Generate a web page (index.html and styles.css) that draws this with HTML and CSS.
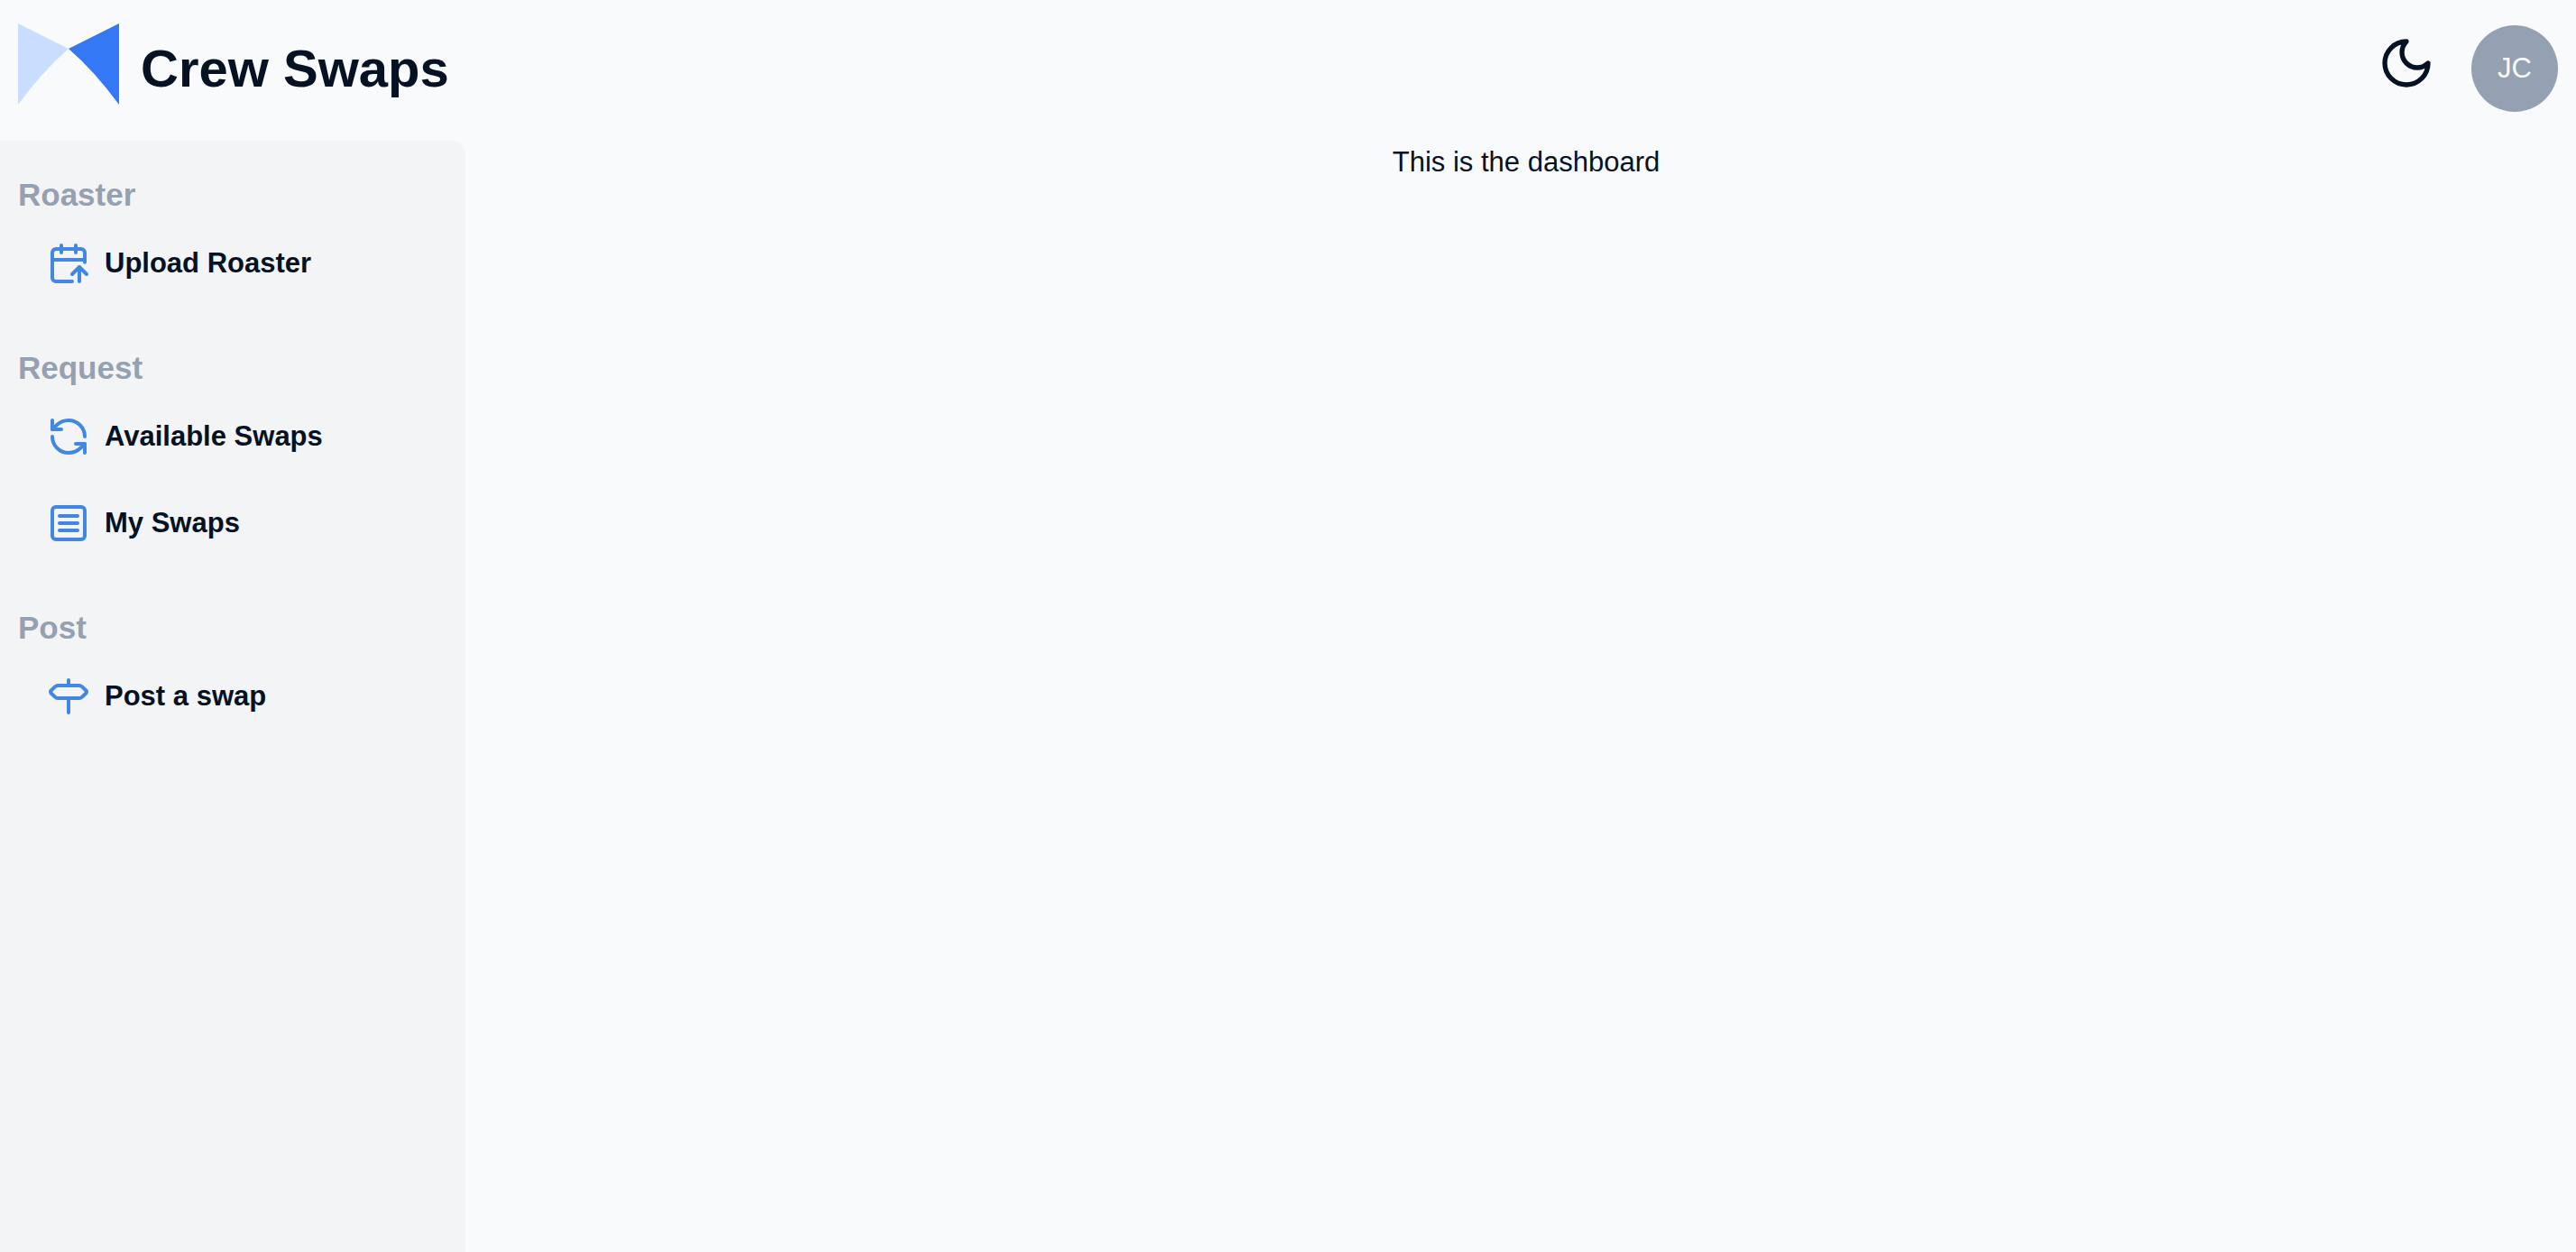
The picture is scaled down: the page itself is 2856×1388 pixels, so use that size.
FILE: index.html
```html
<!DOCTYPE html>
<html lang="en">
<head>
<meta charset="utf-8">
<meta name="viewport" content="width=device-width, initial-scale=1">
<title>Crew Swaps</title>
<link rel="stylesheet" href="styles.css">
</head>
<body>
<header class="topbar">
  <a class="brand" href="#">
    <svg class="brand-logo" viewBox="0 0 112 90" aria-hidden="true">
      <path fill="#c9deff" d="M0 0 56 28Q28 52 0 90Z"/>
      <path fill="#3478f6" d="M112 0 56 28Q84 52 112 90Z"/>
    </svg>
    <span class="brand-name">Crew Swaps</span>
  </a>
  <div class="actions">
    <button class="theme-toggle" type="button" aria-label="Toggle theme">
      <svg class="moon" viewBox="0 0 24 24" aria-hidden="true"><path d="M12 3a6 6 0 0 0 9 9 9 9 0 1 1-9-9Z"/></svg>
    </button>
    <button class="avatar" type="button">JC</button>
  </div>
</header>
<div class="layout">
  <nav class="sidebar">
    <section class="group">
      <h2 class="group-title">Roaster</h2>
      <a class="item" href="#">
        <svg class="icon" viewBox="0 0 24 24" aria-hidden="true"><path d="m14 18 4-4 4 4"/><path d="M16 2v4"/><path d="M18 22v-8"/><path d="M21 11.343V6a2 2 0 0 0-2-2H5a2 2 0 0 0-2 2v14a2 2 0 0 0 2 2h9"/><path d="M3 10h18"/><path d="M8 2v4"/></svg>
        Upload Roaster
      </a>
    </section>
    <section class="group">
      <h2 class="group-title">Request</h2>
      <a class="item" href="#">
        <svg class="icon" viewBox="0 0 24 24" aria-hidden="true"><path d="M21 12a9 9 0 0 0-9-9 9.75 9.75 0 0 0-6.74 2.74L3 8"/><path d="M3 3v5h5"/><path d="M3 12a9 9 0 0 0 9 9 9.75 9.75 0 0 0 6.74-2.74L21 16"/><path d="M16 16h5v5"/></svg>
        Available Swaps
      </a>
      <a class="item" href="#">
        <svg class="icon" viewBox="0 0 24 24" aria-hidden="true"><rect width="18" height="18" x="3" y="3" rx="2"/><path d="M7 8h10"/><path d="M7 12h10"/><path d="M7 16h10"/></svg>
        My Swaps
      </a>
    </section>
    <section class="group">
      <h2 class="group-title">Post</h2>
      <a class="item" href="#">
        <svg class="icon" viewBox="0 0 24 24" aria-hidden="true"><path d="M12 13v8"/><path d="M12 3v3"/><path d="M18 6a2 2 0 0 1 1.387.56l2.307 2.220a1 1 0 0 1 0 1.440l-2.307 2.220A2 2 0 0 1 18 13H6a2 2 0 0 1-1.387-.56l-2.306-2.220a1 1 0 0 1 0-1.440l2.306-2.220A2 2 0 0 1 6 6z"/></svg>
        Post a swap
      </a>
    </section>
  </nav>
  <main class="content">
    <p class="message">This is the dashboard</p>
  </main>
</div>
</body>
</html>
```
FILE: styles.css
```css
* {
  box-sizing: border-box;
}

body {
  margin: 0;
  min-height: 100vh;
  display: flex;
  flex-direction: column;
  background: #f9fafc;
  color: #061223;
  font-family: "Liberation Sans", Arial, Helvetica, sans-serif;
  font-size: 31px;
  line-height: 48px;
}

a {
  color: inherit;
  text-decoration: none;
}

button {
  border: 0;
  padding: 0;
  font: inherit;
  cursor: pointer;
}

.topbar {
  display: flex;
  justify-content: space-between;
  align-items: center;
  height: 152px;
  margin-bottom: 4px;
  padding: 0 20px;
}

.brand {
  display: flex;
  align-items: center;
  gap: 24px;
}

.brand-logo {
  width: 112px;
  height: 90px;
  margin-bottom: 10px;
}

.brand-name {
  font-size: 58px;
  font-weight: 700;
  line-height: 72px;
}

.actions {
  display: flex;
  align-items: center;
  gap: 40px;
}

.theme-toggle {
  height: 76px;
  background: none;
  color: inherit;
}

.moon {
  display: block;
  width: 64px;
  height: 64px;
  margin-bottom: 12px;
}

.moon,
.icon {
  fill: none;
  stroke: currentColor;
  stroke-width: 2;
  stroke-linecap: round;
  stroke-linejoin: round;
}

.avatar {
  width: 96px;
  height: 96px;
  border-radius: 50%;
  background: #94a1b3;
  color: #f9fafc;
}

.layout {
  flex: 1;
  display: flex;
  gap: 12px;
}

.sidebar {
  flex: none;
  width: 516px;
  padding: 32px 20px;
  display: flex;
  flex-direction: column;
  gap: 40px;
  border-top-right-radius: 16px;
  background: #f3f4f6;
}

.group-title {
  margin: 0;
  color: #94a1b3;
  font-size: 35px;
  font-weight: 700;
  line-height: 56px;
}

.item {
  display: flex;
  align-items: center;
  gap: 16px;
  height: 96px;
  padding-left: 32px;
  font-weight: 700;
}

.icon {
  width: 48px;
  height: 48px;
  color: #4287e2;
}

.content {
  flex: 1;
  text-align: center;
}

.message {
  margin: 0;
}
```
